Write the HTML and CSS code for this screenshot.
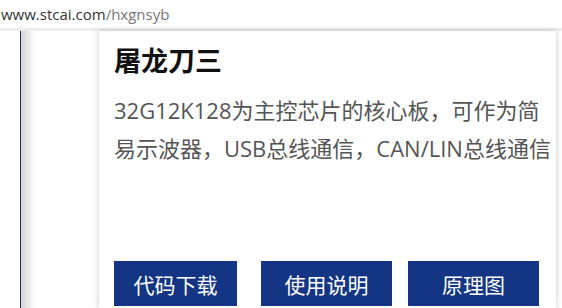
FILE: index.html
```html
<!DOCTYPE html>
<html lang="zh-CN">
<head>
<meta charset="utf-8">
<title>屠龙刀三</title>
<link rel="stylesheet" href="styles.css">
</head>
<body>
<div class="urlbar"><span class="host">www.stcai.com</span><span class="path">/hxgnsyb</span></div>
<div class="divider"></div>
<div class="main">
  <div class="gutter"></div>
  <div class="rail"></div>
  <div class="card">
    <h2 class="title">屠龙刀三</h2>
    <p class="desc">32G12K128为主控芯片的核心板，可作为简易示波器，USB总线通信，CAN/LIN总线通信</p>
    <div class="actions">
      <a class="btn btn-code" href="#">代码下载</a>
      <a class="btn btn-manual" href="#">使用说明</a>
      <a class="btn btn-schematic" href="#">原理图</a>
    </div>
  </div>
</div>
</body>
</html>
```
FILE: styles.css
```css
html, body {
  margin: 0;
  padding: 0;
  background: #fff;
}
body {
  width: 562px;
  height: 308px;
  overflow: hidden;
  font-family: "Open Sans", "Noto Sans CJK SC", sans-serif;
}
.urlbar {
  height: 28px;
  line-height: 28px;
  font-size: 15px;
  white-space: nowrap;
  padding-left: 1px;
  font-family: "Open Sans", sans-serif;
}
.host { color: #333; }
.path { color: #777; }
.divider {
  height: 3px;
  background: #ededed;
}
.main {
  display: flex;
  height: 277px;
}
.gutter {
  width: 20px;
  flex: none;
}
.rail {
  width: 14px;
  flex: none;
  border-left: 1px solid #22365e;
  background: linear-gradient(to right, #d4d4d4, #fff);
}
.card {
  margin-left: 64px;
  width: 457px;
  flex: none;
  background: #fff;
  box-shadow: 0 0 6px rgba(0, 0, 0, 0.22);
  padding: 12px 4px 0 15px;
  box-sizing: border-box;
  display: flex;
  flex-direction: column;
}
.title {
  margin: 0;
  font-size: 27px;
  line-height: 34px;
  font-weight: bold;
  color: #111;
  font-family: "Noto Sans CJK SC", sans-serif;
}
.desc {
  margin: 14px 0 0;
  font-size: 22px;
  line-height: 38px;
  color: #555;
}
.actions {
  display: flex;
  margin-top: auto;
  margin-bottom: 2px;
}
.btn {
  display: flex;
  align-items: center;
  justify-content: center;
  height: 45px;
  background: #133584;
  color: #fff;
  text-decoration: none;
  font-size: 21px;
  font-family: "Noto Sans CJK SC", sans-serif;
}
.btn-code { width: 123px; }
.btn-manual { width: 131px; margin-left: 24px; }
.btn-schematic { width: 131px; margin-left: 16px; }
```
